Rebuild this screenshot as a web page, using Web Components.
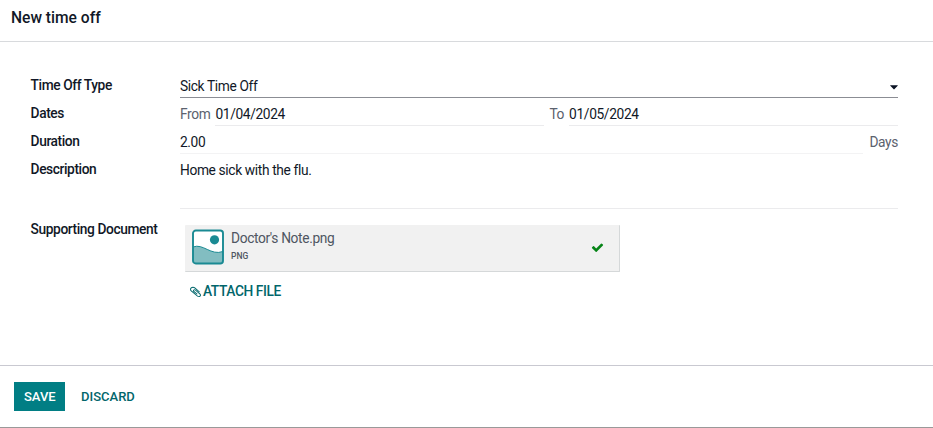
<!DOCTYPE html>
<html lang="en">
<head>
<meta charset="utf-8">
<title>New time off</title>
<style>
html,body{margin:0;height:100%;background:#fff}
body{font:400 13.75px/20px Roboto,"Liberation Sans",sans-serif;letter-spacing:-.36px;color:#111827;overflow:hidden}
</style>
</head>
<body>
<time-off-dialog>
  <form-row label="Time Off Type"><field-value class="grow" kind="select">Sick Time Off</field-value></form-row>
  <form-row label="Dates">
    <field-hint>From</field-hint><field-value style="width:329px;margin:0 5px">01/04/2024</field-value>
    <field-hint>To</field-hint><field-value class="grow" style="margin-left:5px">01/05/2024</field-value>
  </form-row>
  <form-row label="Duration"><field-value class="grow" kind="faint">2.00</field-value><field-hint style="margin-left:6px">Days</field-hint></form-row>
  <form-row label="Description" style="height:51px"><field-value class="grow">Home sick with the flu.</field-value></form-row>
  <form-row label="Supporting Document" style="height:90px;margin-top:5px;">
    <file-attachments><file-card name="Doctor's Note.png" type="PNG"></file-card></file-attachments>
  </form-row>
  <action-button slot="actions" kind="primary">SAVE</action-button>
  <action-button slot="actions">DISCARD</action-button>
</time-off-dialog>
<script>
const define = (tag, html) => customElements.define(tag, class extends HTMLElement {
  constructor() {
    super();
    this.attachShadow({mode: 'open'}).innerHTML = html;
  }
  connectedCallback() {
    for (const el of this.shadowRoot.querySelectorAll('[data-attr]'))
      el.textContent = this.getAttribute(el.dataset.attr) || '';
  }
});

define('time-off-dialog', `<style>
:host{display:flex;flex-direction:column;height:428px;box-sizing:border-box;border-bottom:1px solid #999}
header{box-sizing:border-box;height:42px;padding:8px 11px 0;border-bottom:1px solid #d8dadd;font-size:15.6px;letter-spacing:0;font-weight:500}
main{flex:1;display:flex;flex-direction:column;gap:4px;padding:32px 35px 0 30.6px}
footer{box-sizing:border-box;height:62px;display:flex;align-items:flex-start;padding:16px 14px 0;border-top:1px solid #c9c9d1}
</style><header>New time off</header><main><slot></slot></main><footer><slot name="actions"></slot></footer>`);

define('form-row', `<style>
:host{display:flex;height:24px;flex:none}
label{width:149.4px;flex:none;font-weight:500;line-height:22px;letter-spacing:-.41px}
div{flex:1;display:flex;min-width:0}
::slotted(.grow){flex:1}
</style><label data-attr="label"></label><div><slot></slot></div>`);

define('field-value', `<style>
:host{display:flex;justify-content:space-between;box-sizing:border-box;border-bottom:1px solid #ebebed;line-height:24px;min-width:0}
:host([kind=select]){border-color:#8b8d94}
:host([kind=faint]){border-color:#f3f3f4}
svg{display:none;width:8px;height:5px;margin-top:11px}
:host([kind=select]) svg{display:block}
</style><slot></slot><svg viewBox="0 0 8 5"><path d="M.4 .3h7.2q.4.2.1.5L4.3 4.3q-.3.2-.6 0L.3.8Q0 .5.4.3z" fill="#0b1324"/></svg>`);

define('field-hint', `<style>:host{display:block;color:#5b626e;line-height:24px;white-space:nowrap}</style><slot></slot>`);

define('file-attachments', `<style>
:host{display:flex;flex-direction:column;align-items:flex-start;padding:7px 0 0 5px}
button{all:unset;display:flex;align-items:center;gap:2px;margin:10px 0 0 5px;font-weight:500;color:#01666b;line-height:18px;letter-spacing:-.4px}
svg{width:11px;height:11px;margin-top:1px}
</style><slot></slot><button><svg viewBox="0 0 1408 1664" preserveAspectRatio="none"><path fill="currentColor" d="M1404 1385q0 117-79 196t-196 79q-135 0-235-100l-777-776q-113-115-113-271 0-159 110-270t269-111q158 0 273 113l605 606q10 10 10 22 0 16-30.5 46.5t-46.5 30.5q-13 0-23-10l-606-607q-79-77-181-77-106 0-179 75t-73 181q0 105 76 181l776 777q63 63 145 63 64 0 106-42t42-106q0-82-63-145l-581-581q-26-24-60-24-29 0-48 19t-19 48q0 32 25 59l410 410q10 10 10 22 0 16-31 47t-47 31q-12 0-22-10l-410-410q-63-61-63-149 0-82 57-139t139-57q88 0 149 63l581 581q100 98 100 235z"/></svg><span>ATTACH FILE</span></button>`);

define('file-card', `<style>
:host{display:flex;box-sizing:border-box;width:435px;height:47px;padding:4px 15px 0 7px;background:#f1f1f1;border:solid #d5d8d9;border-width:0 1px 1px 0;border-radius:1px}
.thumb{width:32px;height:36px;flex:none}
.text{flex:1;padding-left:7px;color:#4f5662}
.name{line-height:18px;height:20px}
.type{font-size:8.5px;letter-spacing:0;font-weight:500;line-height:12px;margin-top:1px}
.check{width:13px;height:13px;margin-top:12px}
</style><svg class="thumb" viewBox="0 0 32 36"><rect x="1" y="1.5" width="30" height="33" rx="2.8" fill="#fff"/><path d="M1 18C11 14 19 27 31 22.5V32q0 2.5-2.5 2.5h-25Q1 34.500 1 32z" fill="#82bdc1"/><path d="M1 18C11 14 19 27 31 22.500" fill="none" stroke="#1a8a93"/><circle cx="22.500" cy="10.800" r="4.600" fill="#1a8a93"/><rect x="1" y="1.500" width="30" height="33" rx="2.800" fill="none" stroke="#1a8a93" stroke-width="1.900"/></svg>
<div class="text"><div class="name" data-attr="name"></div><div class="type" data-attr="type"></div></div>
<svg class="check" viewBox="0 0 1792 1792"><path fill="#068417" d="M1671 566q0 40-28 68l-724 724-136 136q-28 28-68 28t-68-28l-136-136-362-362q-28-28-28-68t28-68l136-136q28-28 68-28t68 28l294 295 656-657q28-28 68-28t68 28l136 136q28 28 28 68z"/></svg>`);

define('action-button', `<style>
:host{display:block;box-sizing:border-box;height:29px;padding:0 10px;margin-right:6px;font-size:13px;letter-spacing:0;font-weight:500;line-height:29px;color:#01666b}
:host([kind=primary]){width:51px;background:#017e84;color:#fff}
</style><slot></slot>`);
</script>
</body>
</html>
